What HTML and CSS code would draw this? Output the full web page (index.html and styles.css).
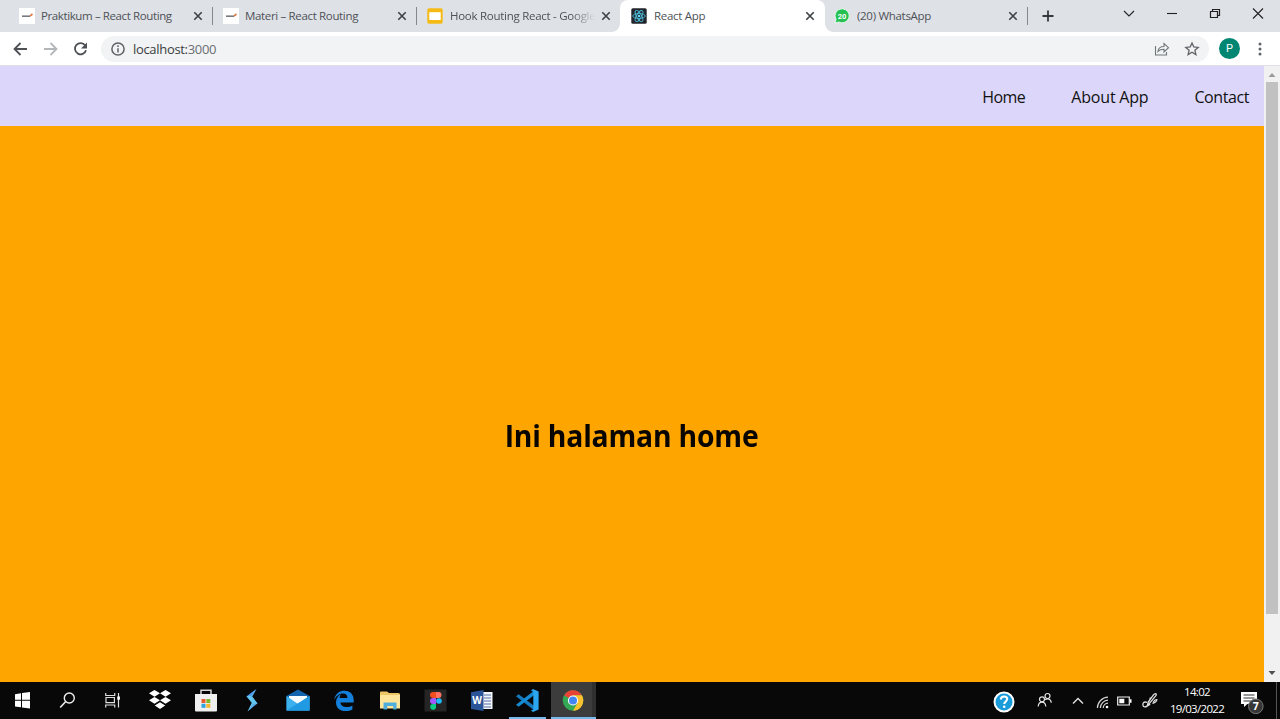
FILE: index.html
```html
<!DOCTYPE html>
<html lang="id">
<head>
<meta charset="utf-8">
<title>React App</title>
<link rel="stylesheet" href="styles.css">
</head>
<body>
<div class="screen">
  <div class="tabstrip">
    <div class="tab">
      <svg class="favicon" viewBox="0 0 16 16"><rect width="16" height="16" fill="#fff"/><path d="M3 8.2h8" stroke="#777b80" stroke-width="1.6"/><path d="M11 8l2.5-2" stroke="#e07b45" stroke-width="1.7"/></svg>
      <span class="tab-title t-praktikum">Praktikum – React Routing</span>
      <svg class="close" viewBox="0 0 10 10"><path d="M1.3 1.3l7.4 7.4M8.7 1.3L1.3 8.7"/></svg>
    </div>
    <div class="tab">
      <svg class="favicon" viewBox="0 0 16 16"><rect width="16" height="16" fill="#fff"/><path d="M3 8.2h8" stroke="#777b80" stroke-width="1.6"/><path d="M11 8l2.5-2" stroke="#e07b45" stroke-width="1.7"/></svg>
      <span class="tab-title t-materi">Materi – React Routing</span>
      <svg class="close" viewBox="0 0 10 10"><path d="M1.3 1.3l7.4 7.4M8.7 1.3L1.3 8.7"/></svg>
    </div>
    <div class="tab plain">
      <svg class="favicon" viewBox="0 0 16 16"><rect x=".3" y=".3" width="15.4" height="15.4" rx="1.8" fill="#f5ba15"/><rect x="2.3" y="4.2" width="11.4" height="7.8" fill="#fff"/></svg>
      <span class="tab-title t-hook">Hook Routing React - Google</span>
      <svg class="close" viewBox="0 0 10 10"><path d="M1.3 1.3l7.4 7.4M8.7 1.3L1.3 8.7"/></svg>
    </div>
    <div class="tab active">
      <svg class="favicon" viewBox="0 0 16 16"><rect x=".3" y=".3" width="15.4" height="15.4" rx="1.5" fill="#20262c"/><g fill="none" stroke="#4db8d6" stroke-width=".9"><ellipse cx="8" cy="8" rx="6.2" ry="2.5"/><ellipse cx="8" cy="8" rx="6.2" ry="2.5" transform="rotate(60 8 8)"/><ellipse cx="8" cy="8" rx="6.2" ry="2.5" transform="rotate(120 8 8)"/></g><circle cx="8" cy="8" r="1.3" fill="#61dafb"/></svg>
      <span class="tab-title t-react">React App</span>
      <svg class="close" viewBox="0 0 10 10"><path d="M1.3 1.3l7.4 7.4M8.7 1.3L1.3 8.7"/></svg>
    </div>
    <div class="tab last">
      <svg class="favicon" viewBox="0 0 16 16"><path d="M8.2.8a7 7 0 1 1-3.3 13.2L.9 15l1.2-3.6A7 7 0 0 1 8.2.8z" fill="#25c052" stroke="#f4fff7" stroke-width=".8"/><text x="8.1" y="10.8" class="fav-count">20</text></svg>
      <span class="tab-title t-wa">(20) WhatsApp</span>
      <svg class="close" viewBox="0 0 10 10"><path d="M1.3 1.3l7.4 7.4M8.7 1.3L1.3 8.7"/></svg>
    </div>
    <svg class="newtab" viewBox="0 0 12 12"><path d="M6 .5v11M.5 6h11" stroke="#35383b" stroke-width="1.8"/></svg>
    <div class="window-buttons">
      <svg viewBox="0 0 43 27"><path d="M17 11l5 5 5-5"/></svg>
      <svg viewBox="0 0 43 27"><path d="M17 13.5h10"/></svg>
      <svg viewBox="0 0 43 27"><path d="M17.5 11.5h7v6h-7zM19.5 11.5v-2h7v6h-2" stroke-width="1.2"/></svg>
      <svg viewBox="0 0 43 27"><path d="M17 8.5l10 10M27 8.5l-10 10"/></svg>
    </div>
  </div>

  <div class="toolbar">
    <svg class="nav-icon" viewBox="0 0 30 30"><path d="M27 15H15M20.5 9L14.5 15l6 6" stroke="#4d5156"/></svg>
    <svg class="nav-icon" viewBox="0 0 30 30"><path d="M14 15h12M20.5 9l6 6-6 6" stroke="#b4b7ba"/></svg>
    <svg class="nav-icon" viewBox="0 0 30 30"><path d="M25.2 11.5A5.6 5.6 0 1 0 26 16.2" stroke="#4d5156"/><path d="M27 8.5v6h-6z" fill="#4d5156"/></svg>
    <div class="omnibox">
      <svg class="info" viewBox="0 0 14 14"><circle cx="7" cy="7" r="6.1"/><path d="M7 6.2v4.2M7 3.3v1.6"/></svg>
      <span class="url">localhost:<span class="port">3000</span></span>
      <svg class="share" viewBox="0 0 16 16"><path d="M1.5 5v9h11v-3M4 10.5c.3-3.6 2.4-5 6-5V2.5l4.5 4.2L10 11V8.3c-2.6 0-4.4.4-6 2.2z"/></svg>
      <svg class="star" viewBox="0 0 16 16"><path d="M8 2l1.8 4 4.4.4-3.3 2.9 1 4.3L8 11.3l-3.9 2.3 1-4.3-3.3-2.9L6.2 6z"/></svg>
    </div>
    <span class="avatar">P</span>
    <svg class="menu" viewBox="0 0 4 14"><circle cx="2" cy="2.1" r="1.5"/><circle cx="2" cy="7" r="1.5"/><circle cx="2" cy="11.9" r="1.5"/></svg>
  </div>

  <div class="viewport">
    <div class="page">
      <nav class="navbar">
        <span class="link-home">Home</span>
        <span class="link-about">About App</span>
        <span class="link-contact">Contact</span>
      </nav>
      <main class="home"><h1>Ini halaman home</h1></main>
    </div>
    <div class="scrollbar">
      <svg viewBox="0 0 16 16"><path d="M4.5 11h7L8 7z" fill="#9b9b9b"/></svg>
      <div class="thumb"></div>
      <svg class="arrow-down" viewBox="0 0 16 16"><path d="M4.5 5h7L8 9z" fill="#505050"/></svg>
    </div>
  </div>

  <div class="taskbar">
    <div class="apps">
      <div class="sys"><svg viewBox="0 0 46 37"><path d="M15 12.2l6-.9v6.5h-6zM22 11.1l8-1.1v7.8h-8zM15 18.8h6v6.5l-6-.9zM22 18.8h8v7.7l-8-1.1z" fill="#fff"/></svg></div>
      <div class="sys"><svg viewBox="0 0 46 37"><circle cx="24.3" cy="16" r="5" fill="none" stroke="#eee" stroke-width="1.4"/><path d="M20.5 19.8L15.2 25.5" stroke="#eee" stroke-width="1.6"/></svg></div>
      <div class="sys"><svg viewBox="0 0 46 37"><path d="M15.7 11v2.5h9V11M15.7 25.5v-2.5h9v2.5M16 15.5h8.4v5.2H16zM28.5 11v14.5" fill="none" stroke="#ddd" stroke-width="1.2"/><rect x="27.3" y="14.5" width="2.6" height="3.2" fill="#fff"/></svg></div>
      <div class="app"><svg viewBox="0 0 46 37"><path d="M17.5 7.9l5.5 3.4-5.5 3.4-5.5-3.4zM28.5 7.9l5.5 3.4-5.5 3.4-5.5-3.4zM17.5 14.9l5.5 3.4-5.5 3.4-5.5-3.4zM28.5 14.9l5.5 3.4-5.5 3.4-5.5-3.4zM23 20.3l5.2 3.3-5.2 3.3-5.2-3.3z" fill="#fff"/></svg></div>
      <div class="app"><svg viewBox="0 0 46 37"><path d="M18 12.5V8.3h10v4.2" fill="none" stroke="#d6d6d6" stroke-width="1.5"/><path d="M12 12h22v16.5q0 1-1 1H13q-1 0-1-1z" fill="#f0f0f0"/><path d="M18.5 17h4v4h-4z" fill="#e75b2f"/><path d="M23.3 17h4v4h-4z" fill="#7db92c"/><path d="M18.5 21.8h4v4h-4z" fill="#2ba4df"/><path d="M23.3 21.8h4v4h-4z" fill="#f5b62c"/></svg></div>
      <div class="app"><svg viewBox="0 0 46 37"><defs><linearGradient id="swift" x2="1" y2="1"><stop stop-color="#245de0"/><stop offset=".55" stop-color="#67c3ee"/><stop offset="1" stop-color="#386ee6"/></linearGradient></defs><path d="M27.5 7l-10 7.3 5.3 6.5-4.3 8.6 10-8-5.2-7z" fill="url(#swift)"/><path d="M17.5 14.3l4-.8 7 7.9-4.5.7z" fill="#62c7ef"/></svg></div>
      <div class="app"><svg viewBox="0 0 46 37"><path d="M11.5 14L23 7.5 34.5 14v14.5h-23z" fill="#1264ae"/><path d="M14 14h18v9H14z" fill="#f6fbff"/><path d="M11.5 14L23 22l11.5-8v14.5h-23z" fill="#3db1ed"/><path d="M11.5 28.5L34.5 14v14.5z" fill="#209ae2"/></svg></div>
      <div class="app"><svg viewBox="0 0 46 37"><path d="M13.3 17.4C14.4 10.7 19 8.5 23.5 8.5c6 0 9.3 4.2 9.2 9.5v2.3H19.4c.3 3.2 3.2 4.5 6 4.5 2.4 0 4.3-.6 6-1.7v4.2c-2 1-4.3 1.5-6.8 1.5-6 0-9.6-3.6-9.6-8.7 0-3.9 2.1-6.7 5-8.2-.8.9-1.3 2.2-1.4 3.8h7.8c0-2.8-1.4-4.5-4.3-4.5-3.2 0-6.5 1.8-8.8 6.2z" fill="#1380db" transform="translate(0 .3)"/></svg></div>
      <div class="app"><svg viewBox="0 0 46 37"><path d="M13 10.5q0-1 1-1h6l2 1.5h9.5q1.5 0 1.5 1.5v13H13z" fill="#edc763"/><path d="M13 13h20v13.5H13z" fill="#ffe69a"/><path d="M16.5 27.5v-7h13v7h-3.3V24h-6v3.5z" fill="#4faedc"/></svg></div>
      <div class="app"><svg viewBox="0 0 46 37"><rect x="11.5" y="7.5" width="22" height="22" fill="#252525"/><path d="M23 10v6h-3a3 3 0 0 1 0-6z" fill="#f24e1e"/><path d="M23 10h2.5a3 3 0 0 1 0 6H23z" fill="#ff7262"/><path d="M23 16v6h-3a3 3 0 0 1 0-6z" fill="#a259ff"/><circle cx="26" cy="19" r="2.8" fill="#1abcfe"/><path d="M23 22v2.5A2.9 2.9 0 1 1 20 22z" fill="#0acf83"/></svg></div>
      <div class="app narrow"><svg viewBox="0 0 46 37"><path d="M23 10h10.5v17H23z" fill="#f4f6fb"/><path d="M25 13h7M25 16h7M25 19h7M25 22h7M25 25h7" stroke="#526da8"/><path d="M12 10.2L24.5 8v21L12 27z" fill="#2a5699"/><text x="18.2" y="22.3" class="word">W</text></svg></div>
      <div class="app open"><svg viewBox="0 0 46 37"><path d="M12 14.3l2.6-2L31 24.4V29z" fill="#1679bd"/><path d="M12 22.7l2.6 2.1L31 12.6V8z" fill="#168bd1"/><path d="M29 7l5.6 2.6v17.8L29 30l-2-1.5 2.3-1V9.8L27 8.5z" fill="#2ca6ee"/></svg></div>
      <div class="app open current"><svg viewBox="0 0 46 37"><circle cx="23" cy="18.5" r="10.3" fill="#34a853"/><path d="M23 18.5L14.08 13.35A10.3 10.3 0 0 1 31.92 13.35H23z" fill="#e94335"/><path d="M23 13.35h8.92A10.3 10.3 0 0 1 23 28.8l4.46-7.7z" fill="#fbc02d"/><circle cx="23" cy="18.5" r="5.1" fill="#fff"/><circle cx="23" cy="18.5" r="4" fill="#4285f4"/></svg></div>
    </div>
    <div class="tray">
      <svg class="help" viewBox="0 0 22 22"><circle cx="11" cy="11" r="9.5" fill="#1a9cdb" stroke="#fff" stroke-width="2"/><path d="M7.8 8.5Q8 5.5 11.2 5.5q3 0 3 2.6c0 2.2-3 2.5-3 5" fill="none" stroke="#fff" stroke-width="2.1"/><circle cx="11.2" cy="15.8" r="1.3" fill="#fff"/></svg>
      <svg class="people" viewBox="0 0 16 16"><g fill="none" stroke="#e4e4e4" stroke-width="1.2"><circle cx="5" cy="7.3" r="2.5"/><path d="M1.2 14.5q.4-4.3 3.8-4.3t3.8 4.3"/><circle cx="10.5" cy="4" r="2.5"/><path d="M8.2 7.8q1-1 2.3-1 3.3 0 3.8 4"/></g></svg>
      <svg class="chevron" viewBox="0 0 12 12"><path d="M1 8.5l5-5 5 5" fill="none" stroke="#e5e5e5" stroke-width="1.3"/></svg>
      <svg class="wifi" viewBox="0 0 14 14"><g fill="none" stroke="#d5d5d5" stroke-width="1.2"><path d="M1.4 13A11 11 0 0 1 12 2.2M4.3 13A8 8 0 0 1 12 5.2M7.2 13A5 5 0 0 1 12 8.2"/></g><circle cx="11" cy="12" r="1.3" fill="#fff"/></svg>
      <svg class="battery" viewBox="0 0 15 10"><path d="M.7 1h11.6v8H.7z" fill="none" stroke="#f0f0f0" stroke-width="1.2"/><path d="M2.3 2.7h5v4.6h-5zM13 3.2h1.5v3.6H13z" fill="#fff"/></svg>
      <svg class="pen" viewBox="0 0 16 16"><path d="M5 9.3c-3-1-4.5.5-4 3 .3 2 3 2 5-.2L13.7 2.8q1.3-1.7-.2-2.1-1 0-2.4 1.6L6.2 9l-1 4.2 3-1.9M8.5 4.5l-1.2 3.8M11 9.5q1.8-3 3.8-2.8-.2 2.3-4.3 3.8" fill="none" stroke="#dedede" stroke-width="1.3"/></svg>
      <div class="clock"><span class="time">14:02</span><span class="date">19/03/2022</span></div>
      <svg class="notice" viewBox="0 0 24 24"><path d="M1 1h16v12H7.3L4 16v-3H1z" fill="#fff"/><path d="M3.5 4h11M3.5 7h11M3.5 10h8" stroke="#333" stroke-width="1.1"/><circle cx="15.8" cy="15.3" r="7.3" fill="#363636" stroke="#777" stroke-width="1"/><text x="15.8" y="19.3" class="notice-count">7</text></svg>
      <div class="desktop-edge"></div>
    </div>
  </div>
</div>
</body>
</html>
```
FILE: styles.css
```css
* { box-sizing: border-box; }
body { margin: 0; font-family: "Open Sans", "Noto Sans", sans-serif; }
svg { display: block; flex: none; }
.screen { width: 1280px; height: 719px; display: flex; flex-direction: column; overflow: hidden; background: #fff; }

.tabstrip { height: 32px; flex: none; display: flex; background: #dee1e6; padding-left: 9px; }
.tab { width: 204px; height: 32px; flex: none; display: flex; align-items: center; padding: 0 10px 0 10px; position: relative; }
.tab::after { content: ""; position: absolute; right: 0; top: 7px; width: 1px; height: 18px; background: #85898e; }
.tab.plain::after, .tab.active::after { display: none; }
.tab.active { background: #fff; border-radius: 8px 8px 0 0; margin-left: -1px; width: 205px; padding-left: 11px; }
.tab.active::before { content: ""; position: absolute; bottom: 0; left: -8px; right: -8px; height: 8px; background: radial-gradient(circle at 0 0, transparent 7.5px, #fff 8px) left / 8px 8px no-repeat, radial-gradient(circle at 100% 0, transparent 7.5px, #fff 8px) right / 8px 8px no-repeat; }
.tab.last { width: 203px; padding-left: 9px; }
.favicon { width: 16px; height: 16px; }
.tab-title { flex: 1; min-width: 0; margin: 0 7px 0 6px; font-size: 11.5px; line-height: 16px; white-space: nowrap; overflow: hidden; color: #4e5156; }
.t-praktikum { letter-spacing: -.39px; }
.t-materi { letter-spacing: -.34px; }
.t-hook { margin-left: 7px; margin-right: 6px; letter-spacing: -.27px; mask-image: linear-gradient(90deg, #000 calc(100% - 24px), transparent); }
.t-react { margin-left: 7px; letter-spacing: -.3px; }
.t-wa { margin-left: 7px; letter-spacing: -.3px; }
.close { width: 10px; height: 10px; fill: none; stroke: #3c4043; stroke-width: 1.6; }
.fav-count { font: bold 7.5px Roboto, sans-serif; fill: #fff; text-anchor: middle; }
.newtab { width: 12px; height: 12px; margin: 10px 0 0 14px; }
.window-buttons { display: flex; margin: 0 1px 0 auto; }
.window-buttons svg { width: 43px; height: 27px; fill: none; stroke: #222; stroke-width: 1.1; }

.toolbar { height: 34px; flex: none; display: flex; align-items: center; border-bottom: 1px solid #dfe0e5; }
.nav-icon { width: 30px; height: 30px; fill: none; stroke-width: 1.8; }
.omnibox { display: flex; align-items: center; width: 1108px; height: 26px; margin-left: 11px; padding: 0 9px 0 10px; border-radius: 13px; background: #f1f3f4; }
.info { width: 14px; height: 14px; fill: none; stroke: #5f6368; stroke-width: 1.5; }
.url { flex: 1; margin-left: 8px; font-size: 13px; line-height: 18px; letter-spacing: -.32px; color: #3a3d41; }
.port { color: #6b6f73; }
.share { width: 16px; height: 16px; margin-right: 14px; fill: none; stroke: #73777b; stroke-width: 1.1; }
.star { width: 16px; height: 16px; fill: none; stroke: #5f6368; stroke-width: 1.3; }
.avatar { width: 21px; height: 21px; margin-left: 10px; border-radius: 50%; background: #018673; color: #fff; font: 11px/21px Roboto, sans-serif; text-align: center; }
.menu { width: 4px; height: 14px; margin-left: 18px; fill: #5f6368; }

.viewport { flex: 1; min-height: 0; display: flex; }
.page { flex: 1; display: flex; flex-direction: column; }
.navbar { height: 60px; display: flex; justify-content: flex-end; align-items: center; gap: 46px; padding: 2px 15px 0 0; background: #dcd7fa; color: #111; font-size: 16px; }
.link-home { letter-spacing: -.5px; }
.link-about { letter-spacing: -.2px; }
.link-contact { letter-spacing: -.42px; }
.home { flex: 1; display: flex; align-items: center; justify-content: center; background: #ffa500; padding-top: 64px; }
.home h1 { margin: 0; font-size: 30px; line-height: 40px; letter-spacing: -.2px; color: #080500; font-weight: 700; transform: scaleX(.943); }
.scrollbar { width: 16px; display: flex; flex-direction: column; align-items: center; background: #f1f1f1; }
.scrollbar svg { width: 16px; height: 16px; }
.thumb { width: 12px; height: 532px; background: #c1c1c1; }
.scrollbar .arrow-down { margin-top: auto; }

.taskbar { height: 37px; flex: none; display: flex; justify-content: space-between; background: #080808; }
.apps { display: flex; }
.sys { width: 45px; }
.sys svg { width: 46px; height: 37px; }
.sys:nth-child(3) { width: 47px; }
.app { width: 46px; height: 37px; }
.app svg { width: 46px; height: 37px; }
.narrow { width: 45px; }
.open { background: linear-gradient(#76b9ed, #76b9ed) 5px 35px / 37px 2px no-repeat; }
.current { background: linear-gradient(#76b9ed, #76b9ed) 1px 35px / 45px 2px no-repeat, linear-gradient(90deg, transparent 1px, #3c3c3c 1px 42px, #303030 42px); }
.word { font: bold 10px "Open Sans", sans-serif; fill: #fff; text-anchor: middle; }
.tray { display: flex; align-items: center; }
.help { width: 22px; height: 22px; margin-top: 2px; }
.people { width: 16px; height: 16px; margin: -2px 0 0 22px; }
.chevron { width: 12px; height: 12px; margin-left: 19px; }
.wifi { width: 14px; height: 14px; margin: 2px 0 0 12px; }
.battery { width: 15px; height: 10px; margin-left: 7px; }
.pen { width: 16px; height: 16px; margin-left: 10px; }
.clock { width: 64px; margin: -1px 0 0 7px; display: flex; flex-direction: column; align-items: center; font-size: 11.5px; line-height: 17px; letter-spacing: -.7px; color: #fff; }
.notice { width: 24px; height: 24px; margin: 4px 0 0 11px; }
.notice-count { font: bold 10.5px "Open Sans", sans-serif; fill: #fff; text-anchor: middle; }
.desktop-edge { width: 4px; height: 37px; margin-left: 12px; border-left: 1px solid #555; }
```
